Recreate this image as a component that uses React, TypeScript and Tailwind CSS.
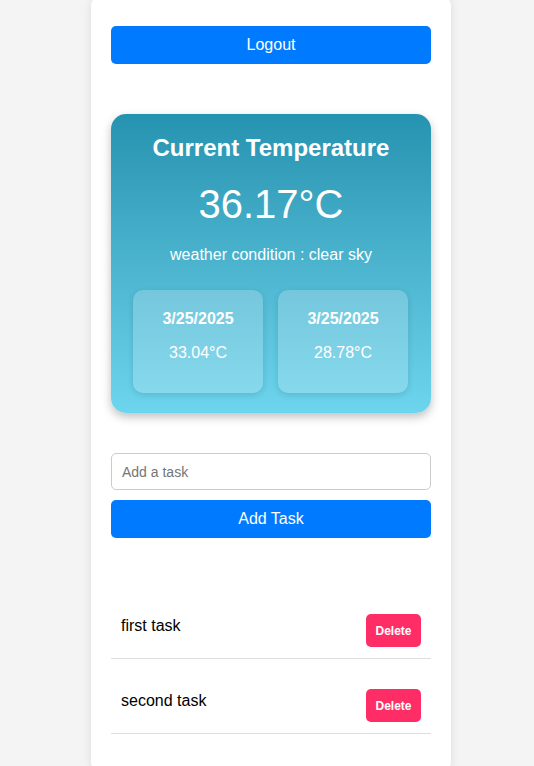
import React from "react";

const forecast = [
  { date: "3/25/2025", temp: "33.04°C" },
  { date: "3/25/2025", temp: "28.78°C" },
];

const tasks = ["first task", "second task"];

export default function App() {
  return (
    <div
      className="min-h-[766px] bg-[#f4f4f4] overflow-hidden"
      style={{ fontFamily: '"Liberation Sans", Arial, sans-serif' }}
    >
      <div className="ml-[91px] w-[360px] min-h-[776px] -mt-[4px] bg-white rounded-[10px] shadow-[0_0_10px_rgba(0,0,0,0.1)] px-[20px] pt-[30px]">
        <button className="w-full h-[38px] rounded-[5px] bg-[#007bff] text-white text-[16px]">
          Logout
        </button>

        <div className="mt-[50px] rounded-[15px] bg-gradient-to-b from-[#2593b0] to-[#6dd5ed] shadow-[0_4px_10px_rgba(0,0,0,0.25)] px-[22px] pt-[20px] pb-[20px] text-white text-center">
          <h2 className="text-[24px] leading-[28px] font-bold">Current Temperature</h2>
          <p className="mt-[19px] text-[40px] leading-[46px]">36.17°C</p>
          <p className="mt-[19px] text-[16px] leading-[18px]">weather condition : clear sky</p>
          <div className="mt-[26px] flex gap-[15px]">
            {forecast.map((f, i) => (
              <div
                key={i}
                className="w-[130px] h-[103px] rounded-[10px] bg-white/20 shadow-[0_2px_6px_rgba(0,0,0,0.12)] pt-[20px]"
              >
                <p className="text-[16px] leading-[18px] font-bold">{f.date}</p>
                <p className="mt-[16px] text-[16px] leading-[18px]">{f.temp}</p>
              </div>
            ))}
          </div>
        </div>

        <input
          className="mt-[40px] block w-full h-[37px] rounded-[5px] border border-[#ccc] px-[10px] text-[14px] placeholder:text-[#757575] outline-none"
          placeholder="Add a task"
        />
        <button className="mt-[10px] w-full h-[38px] rounded-[5px] bg-[#007bff] text-white text-[16px]">
          Add Task
        </button>

        <ul className="mt-[56px]">
          {tasks.map((t) => (
            <li
              key={t}
              className="flex justify-between items-start px-[10px] pt-[20px] pb-[11px] mt-[10px] border-b border-[#ddd]"
            >
              <span className="text-[16px] leading-[18px] mt-[3px] text-black">{t}</span>
              <button className="w-[55px] h-[33px] rounded-[5px] bg-[#ff2d66] text-white text-[12px] font-bold">
                Delete
              </button>
            </li>
          ))}
        </ul>
      </div>
    </div>
  );
}
